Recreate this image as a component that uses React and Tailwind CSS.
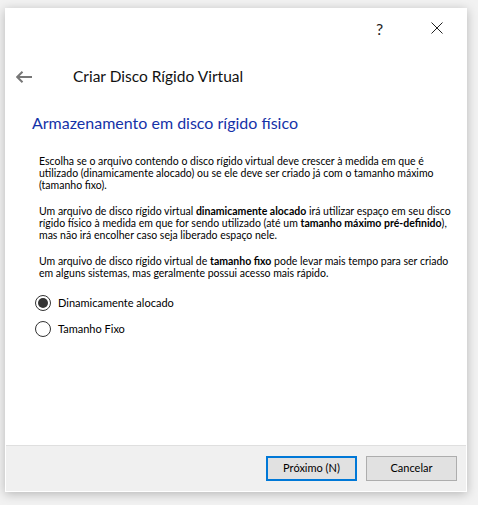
import { useState } from "react";

const font = { fontFamily: 'Lato, "Noto Sans", sans-serif' };

function Radio({ checked, label, onClick }) {
  return (
    <button
      onClick={onClick}
      className="flex items-center gap-[7px] h-[18px] text-left"
    >
      <span className="w-4 h-4 rounded-full border border-[#333] flex items-center justify-center bg-white">
        {checked && <span className="w-[10px] h-[10px] rounded-full bg-[#333]" />}
      </span>
      <span className="text-[11px] text-black">{label}</span>
    </button>
  );
}

export default function App() {
  const [mode, setMode] = useState("dyn");

  return (
    <div className="w-[478px] h-[505px] bg-[#f2f2f2] pt-2 pl-[5px]" style={font}>
      <div className="w-[462px] h-[484px] bg-white shadow-[0_2px_10px_rgba(0,0,0,0.25)] flex flex-col">
        {/* title bar */}
        <div className="h-[45px] flex items-start pt-[12px]">
          <div className="flex-1" />
          <span className="w-[14px] text-[16px] leading-[18px] text-[#222] mr-[41px]">?</span>
          <svg width="12" height="12" viewBox="0 0 12 12" className="mr-[24px] mt-[2px]">
            <path d="M0.5 0.5 L11.5 11.5 M11.5 0.5 L0.5 11.5" stroke="#222" strokeWidth="1" />
          </svg>
        </div>

        {/* header */}
        <div className="h-[59px] flex items-center pl-[11px] pb-[12px]">
          <svg width="17" height="12" viewBox="0 0 17 12">
            <path d="M1 6 H16 M6.5 0.8 L1.2 6 L6.5 11.2" stroke="#777" strokeWidth="2" fill="none" />
          </svg>
          <span className="ml-[40px] text-[15.5px] text-[#111]">
            Criar Disco Rígido Virtual
          </span>
        </div>

        <div className="pl-[27px] text-[16px] leading-[22px] text-[#1532a8]">
          Armazenamento em disco rígido físico
        </div>

        <div className="pl-[34px] pt-[21px] text-[10.5px] leading-[12px] text-black whitespace-nowrap flex flex-col gap-[14px]">
          <p>
            Escolha se o arquivo contendo o disco rígido virtual deve crescer à medida em que é
            <br />
            utilizado (dinamicamente alocado) ou se ele deve ser criado já com o tamanho máximo
            <br />
            (tamanho fixo).
          </p>
          <p>
            Um arquivo de disco rígido virtual <b>dinamicamente alocado</b> irá utilizar espaço em seu disco
            <br />
            rígido físico à medida em que for sendo utilizado (até um <b>tamanho máximo pré-definido</b>),
            <br />
            mas não irá encolher caso seja liberado espaço nele.
          </p>
          <p>
            Um arquivo de disco rígido virtual de <b>tamanho fixo</b> pode levar mais tempo para ser criado
            <br />
            em alguns sistemas, mas geralmente possui acesso mais rápido.
          </p>
        </div>

        <div className="pl-[30px] pt-[15px] flex flex-col gap-[8px]">
          <Radio checked={mode === "dyn"} label="Dinamicamente alocado" onClick={() => setMode("dyn")} />
          <Radio checked={mode === "fix"} label="Tamanho Fixo" onClick={() => setMode("fix")} />
        </div>

        <div className="flex-1" />

        {/* footer */}
        <div className="mx-px mb-px h-[46px] bg-[#f0f0f0] border-t border-[#dfdfdf] flex items-center justify-end gap-[9px] pr-[9px] pb-[1px]">
          <button className="w-[91px] h-[25px] border-2 border-[#0078d7] bg-[#e1e1e1] text-[11px] text-black">
            Próximo (N)
          </button>
          <button className="w-[91px] h-[25px] border border-[#adadad] bg-[#e1e1e1] text-[11px] text-black">
            Cancelar
          </button>
        </div>
      </div>
    </div>
  );
}
